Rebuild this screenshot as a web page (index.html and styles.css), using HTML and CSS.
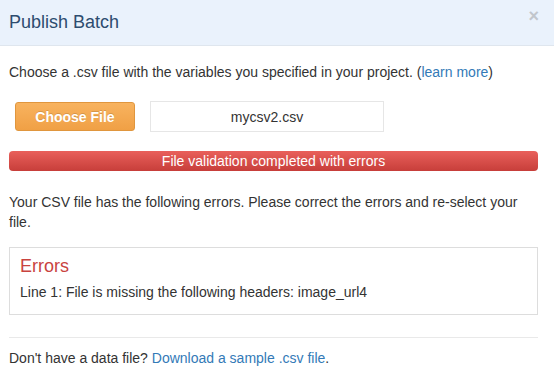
FILE: index.html
```html
<!DOCTYPE html>
<html>
<head>
<meta charset="utf-8">
<link rel="stylesheet" href="styles.css">
</head>
<body>
<div class="modal">
  <div class="modal-header">
    <h1 class="title">Publish Batch</h1>
    <span class="close">×</span>
  </div>
  <div class="modal-body">
    <p class="intro">Choose a .csv file with the variables you specified in your project. (<a href="#">learn more</a>)</p>
    <div class="file-row">
      <button class="btn-choose">Choose File</button>
      <div class="file-name">mycsv2.csv</div>
    </div>
    <div class="status-bar">File validation completed with errors</div>
    <p class="explain">Your CSV file has the following errors. Please correct the errors and re-select your file.</p>
    <div class="errors">
      <h2 class="errors-title">Errors</h2>
      <div class="errors-line">Line 1: File is missing the following headers: image_url4</div>
    </div>
    <hr class="divider">
    <p class="footer">Don't have a data file? <a href="#">Download a sample .csv file</a>.</p>
  </div>
</div>
</body>
</html>
```

FILE: styles.css
```css
* { box-sizing: border-box; }
html, body { margin: 0; padding: 0; background: #fff; }
body {
  font-family: "Liberation Sans", Arial, sans-serif;
  font-size: 14px;
  line-height: 20px;
  color: #333;
}
a { color: #337ab7; text-decoration: none; }
.modal { width: 554px; }
.modal-header {
  height: 46px;
  background: #eaf2fc;
  border-bottom: 1px solid #dfe6ee;
  display: flex;
  align-items: center;
  justify-content: space-between;
  padding: 0 15px 0 9px;
}
.title {
  margin: 0;
  font-size: 18px;
  font-weight: normal;
  color: #2d4c6f;
  line-height: 24px;
  padding-bottom: 1px;
}
.close {
  font-size: 18px;
  font-weight: bold;
  color: #c2c6cc;
  line-height: 20px;
  margin-top: -14px;
}
.modal-body { padding: 0 16px 0 9px; }
.intro { margin: 16px 0 0 0; }
.file-row {
  display: flex;
  align-items: center;
  margin-top: 19px;
  padding-left: 6px;
}
.btn-choose {
  width: 120px;
  height: 29px;
  border: 1px solid #e0963e;
  border-radius: 3px;
  background: linear-gradient(#f8b35f, #f0a045);
  color: #fff;
  font-family: "Liberation Sans", Arial, sans-serif;
  font-size: 14px;
  font-weight: bold;
  text-shadow: 0 -1px 0 rgba(0,0,0,0.15);
  padding: 0;
}
.file-name {
  margin-left: 15px;
  width: 234px;
  height: 31px;
  border: 1px solid #e6e6e6;
  display: flex;
  align-items: center;
  justify-content: center;
  font-size: 14px;
  color: #333;
}
.status-bar {
  margin-top: 19px;
  height: 20px;
  background: linear-gradient(#e9605b, #c73e3a);
  border-radius: 4px;
  color: #fff;
  text-align: center;
  font-size: 14px;
  line-height: 20px;
}
.explain { margin: 21px 0 0 0; }
.errors {
  margin-top: 15px;
  border: 1px solid #ddd;
  height: 68px;
  padding: 8px 10px;
}
.errors-title {
  margin: 0;
  font-size: 18px;
  font-weight: normal;
  color: #c9433f;
  line-height: 20px;
}
.errors-line { margin-top: 6px; }
.divider {
  margin: 22px 0 0 0;
  border: 0;
  border-top: 1px solid #e9e9e9;
}
.footer { margin: 10px 0 0 0; }
```
